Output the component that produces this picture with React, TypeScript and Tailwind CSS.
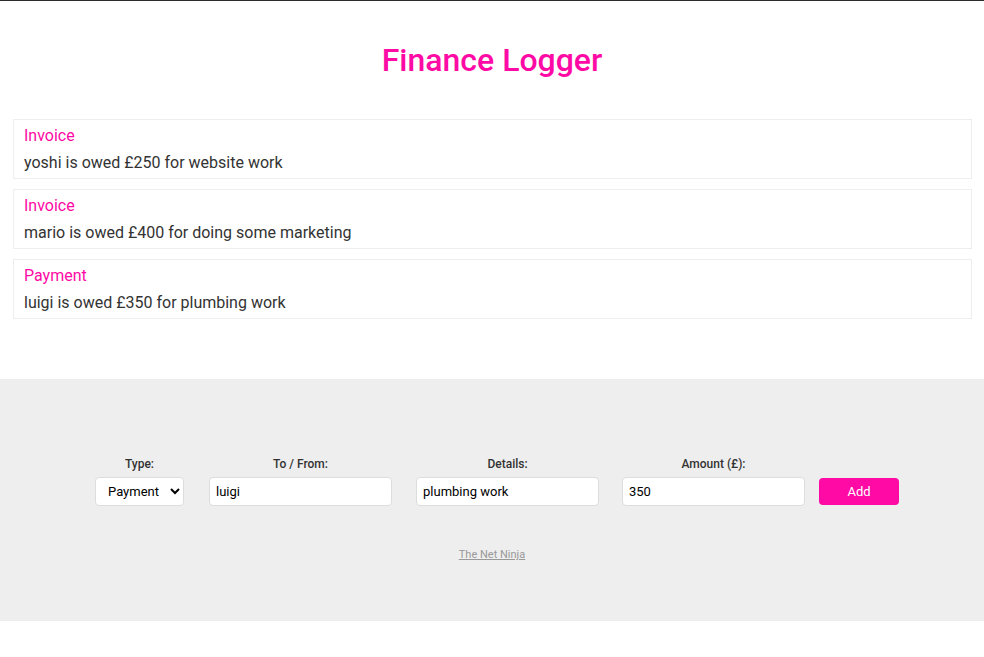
import { useState } from "react";

const docs = [
  { type: "Invoice", text: "yoshi is owed £250 for website work" },
  { type: "Invoice", text: "mario is owed £400 for doing some marketing" },
  { type: "Payment", text: "luigi is owed £350 for plumbing work" },
];

export default function App() {
  const [type, setType] = useState("payment");

  return (
    <div className="min-h-[657px] bg-white border-t border-[#2b2b2b] font-['Roboto',sans-serif] text-[#333]">
      {/* Header */}
      <header className="pt-[41px] pb-[41px] text-center">
        <h1 className="text-[32px] leading-[36px] font-medium text-[#ff0aa5]">Finance Logger</h1>
      </header>

      {/* List */}
      <ul className="ml-[13px] mr-[12px] flex flex-col gap-[10px]">
        {docs.map((doc, i) => (
          <li key={i} className="border border-[#eee] px-[10px] pt-[6px] pb-[4px]">
            <h4 className="text-[16px] leading-[20px] mb-[6px] text-[#ff0aa5]">{doc.type}</h4>
            <p className="text-[16px] leading-[22px]">{doc.text}</p>
          </li>
        ))}
      </ul>

      {/* Form */}
      <footer className="mt-[60px] bg-[#eee] h-[242px] pt-[78px]">
        <form className="flex justify-center items-end pl-[10px]" onSubmit={(e) => e.preventDefault()}>
          <div className="flex flex-col items-center">
            <label className="text-[12px] leading-[14px] font-medium mb-[6px]">Type:</label>
            <select
              value={type}
              onChange={(e) => setType(e.target.value)}
              className="w-[89px] h-[29px] bg-white border border-[#ddd] rounded-[4px] px-[8px] text-[13px] text-black"
            >
              <option value="invoice">Invoice</option>
              <option value="payment">Payment</option>
            </select>
          </div>
          <div className="flex flex-col items-center ml-[25px]">
            <label className="text-[12px] leading-[14px] font-medium mb-[6px]">To / From:</label>
            <input
              type="text"
              defaultValue="luigi"
              className="w-[183px] h-[29px] bg-white border border-[#ddd] rounded-[4px] px-[6px] text-[13px] text-black"
            />
          </div>
          <div className="flex flex-col items-center ml-[24px]">
            <label className="text-[12px] leading-[14px] font-medium mb-[6px]">Details:</label>
            <input
              type="text"
              defaultValue="plumbing work"
              className="w-[183px] h-[29px] bg-white border border-[#ddd] rounded-[4px] px-[6px] text-[13px] text-black"
            />
          </div>
          <div className="flex flex-col items-center ml-[23px]">
            <label className="text-[12px] leading-[14px] font-medium mb-[6px]">Amount (£):</label>
            <input
              type="number"
              defaultValue="350"
              className="w-[183px] h-[29px] bg-white border border-[#ddd] rounded-[4px] px-[6px] text-[13px] text-black"
            />
          </div>
          <button
            type="submit"
            className="ml-[14px] mb-[1px] w-[80px] h-[27px] bg-[#ff0aa5] text-white text-[13px] rounded-[4px]"
          >
            Add
          </button>
        </form>
        <div className="mt-[35px] text-center">
          <a href="#" className="text-[11px] text-[#999] underline">The Net Ninja</a>
        </div>
      </footer>
    </div>
  );
}
